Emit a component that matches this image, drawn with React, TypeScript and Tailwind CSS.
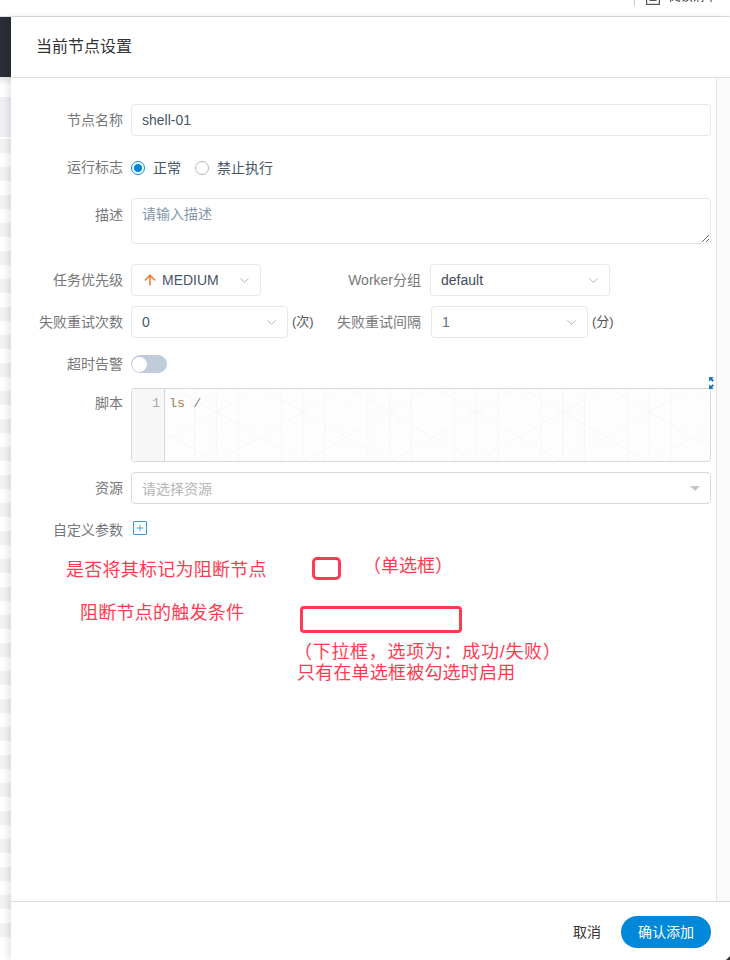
import React from "react";
import { ChevronDown, ArrowUp, Plus } from "lucide-react";

const font = "font-['Liberation_Sans','Noto_Sans_CJK_SC',sans-serif]";

function Label({ children, w = "w-[112px]", cls = "" }: { children: React.ReactNode; w?: string; cls?: string }) {
  return <div className={`${w} ${cls} shrink-0 text-right text-[14px] text-[#777]`}>{children}</div>;
}

function Select({ w, children }: { w: string; children: React.ReactNode }) {
  return (
    <div className={`${w} h-[32px] shrink-0 flex items-center justify-between rounded-[4px] border border-[#e3e9f0] pl-[10px] text-[14px] text-[#475669]`}>
      <div className="flex items-center">{children}</div>
      <ChevronDown size={15} strokeWidth={1.1} className="mr-[8px] text-[#8492a6]" />
    </div>
  );
}

function IsoGrid() {
  return (
    <svg className="absolute inset-0 h-full w-full" aria-hidden="true">
      <defs>
        <pattern id="fine" width="4.33" height="5" patternUnits="userSpaceOnUse" x="0" y="0">
          <path d="M0 0V5M0 0L4.33 2.5M0 5L4.33 2.5" stroke="#f5f5f5" strokeWidth="0.5" fill="none" />
        </pattern>
        <pattern id="major" width="86.6" height="50" patternUnits="userSpaceOnUse" x="8" y="-2">
          <path d="M0 0L86.6 50M0 50L86.6 0M21.65 0V50M43.3 0V50M65 0V50" stroke="#f1f1f1" strokeWidth="0.6" fill="none" />
        </pattern>
      </defs>
      <rect width="100%" height="100%" fill="url(#fine)" />
      <rect width="100%" height="100%" fill="url(#major)" />
    </svg>
  );
}

const stripes = Array.from({ length: 29 }, (_, i) => i);

export default function App() {
  return (
    <div className={`${font} relative flex h-[960px] w-[730px] flex-col overflow-hidden bg-white`}>
      {/* top page bar */}
      <div className="flex h-[17px] shrink-0 justify-end overflow-hidden border-b border-[#dcdfe6] pr-[13px]">
        <div className="flex h-[16px] items-start">
          <div className="h-[6px] w-px bg-[#c8c8c8]" />
          <svg width="14" height="14" viewBox="0 0 14 14" className="ml-[11px] -mt-[9px]" fill="none" stroke="#555" strokeWidth="1.2">
            <rect x="0.6" y="0.6" width="12.8" height="12.8" />
            <path d="M3.5 4.5h7M3.5 7h7M3.5 9.5h7" />
          </svg>
          <span className="ml-[9px] -mt-[12px] text-[12px] leading-[18px] text-[#333]">阅读清单</span>
        </div>
      </div>

      <div className="flex min-h-0 flex-1">
        {/* page behind the drawer */}
        <div className="flex w-[11px] shrink-0 flex-col">
          <div className="h-[60px] shrink-0 bg-[#2a2d37]" />
          <div className="h-[20px] shrink-0 bg-gradient-to-b from-[#e4e4e4] to-white to-40%" />
          <div className="h-[40px] shrink-0 bg-[#eef0f4]" />
          <div className="h-[2px] shrink-0" />
          {stripes.map((i) => (
            <div key={i} className="h-[28px] shrink-0">
              <div className="h-[14px] bg-[#f2f2f2]" />
            </div>
          ))}
        </div>

        {/* drawer */}
        <div className="relative z-10 flex min-w-0 flex-1 flex-col bg-white shadow-[-3px_0_7px_rgba(0,0,0,0.10)]">
          <div className="flex h-[61px] shrink-0 items-center border-b border-[#dcdfe6] pl-[25px] text-[16px] text-[#333]">
            当前节点设置
          </div>

          <div className="flex min-h-0 flex-1">
            <div className="min-w-0 flex-1 pr-[5px] pt-[26px]">
              <div className="flex items-center gap-[8px]">
                <Label>节点名称</Label>
                <input
                  readOnly
                  value="shell-01"
                  className="h-[32px] flex-1 rounded-[4px] border border-[#e3e9f0] px-[10px] text-[14px] text-[#475669] outline-none"
                />
              </div>

              <div className="mt-[16px] flex h-[32px] items-center gap-[8px]">
                <Label cls="-translate-y-[1px]">运行标志</Label>
                <div className="flex items-center text-[14px] text-[#475669]">
                  <span className="flex h-[14px] w-[14px] items-center justify-center rounded-full border border-[#0288d8]">
                    <span className="h-[8px] w-[8px] rounded-full bg-[#0288d8]" />
                  </span>
                  <span className="ml-[8px]">正常</span>
                  <span className="ml-[14px] h-[14px] w-[14px] rounded-full border border-[#b5b8bd]" />
                  <span className="ml-[8px]">禁止执行</span>
                </div>
              </div>

              <div className="mt-[14px] flex items-start gap-[8px]">
                <div className="pt-[7px]">
                  <Label>描述</Label>
                </div>
                <textarea
                  readOnly
                  placeholder="请输入描述"
                  className="h-[46px] flex-1 resize-y rounded-[4px] border border-[#e3e9f0] px-[10px] py-[5px] text-[14px] outline-none placeholder:text-[#8496ab]"
                />
              </div>

              <div className="mt-[20px] flex items-center">
                <Label>任务优先级</Label>
                <div className="ml-[8px]">
                  <Select w="w-[130px]">
                    <ArrowUp size={16} strokeWidth={2.4} className="mr-[4px] text-[#f07b33]" />
                    <span>MEDIUM</span>
                  </Select>
                </div>
                <Label w="w-[160px]">Worker分组</Label>
                <div className="ml-[9px]">
                  <Select w="w-[180px]">
                    <span className="text-[#444c58]">default</span>
                  </Select>
                </div>
              </div>

              <div className="mt-[10px] flex items-center">
                <Label>失败重试次数</Label>
                <div className="ml-[8px]">
                  <Select w="w-[157px]"><span>0</span></Select>
                </div>
                <span className="ml-[4px] w-[25px] text-[13px] text-[#555]">(次)</span>
                <Label w="w-[104px]">失败重试间隔</Label>
                <div className="ml-[10px]">
                  <Select w="w-[157px]"><span className="text-[#5c6b7c]">1</span></Select>
                </div>
                <span className="ml-[4px] text-[13px] text-[#555]">(分)</span>
              </div>

              <div className="mt-[17px] flex h-[18px] items-center gap-[8px]">
                <Label>超时告警</Label>
                <div className="flex h-[18px] w-[36px] items-center rounded-full bg-[#c0ccda] pl-[1px]">
                  <span className="h-[15px] w-[15px] rounded-full bg-white" />
                </div>
              </div>

              <div className="relative mt-[15px] flex items-start gap-[8px]">
                <div className="pt-[5px]">
                  <Label>脚本</Label>
                </div>
                <div className="relative flex h-[74px] flex-1 overflow-hidden rounded-[3px] border border-[#d9d9d9]">
                  <div className="z-10 w-[33px] shrink-0 border-r border-[#d9d9d9] bg-[#f7f7f7] pr-[4px] pt-[6px] text-right font-['Liberation_Mono',monospace] text-[13.5px] leading-[17px] text-[#aaa]">
                    1
                  </div>
                  <div className="relative flex-1">
                    <IsoGrid />
                    <div className="relative pl-[4px] pt-[6px] font-['Liberation_Mono',monospace] text-[13.5px] leading-[17px]">
                      <span className="text-[#a67f59]">ls</span>
                      <span className="text-[#888]"> /</span>
                    </div>
                  </div>
                </div>
                <svg width="5" height="12" viewBox="0 0 5 12" className="absolute -right-[3px] -top-[11px]" fill="#1a76bd" aria-hidden="true">
                  <path d="M0 0H4.5L3.2 1.4L5 3.4L3.6 4.8L1.7 2.9L0 4.5Z" />
                  <path d="M0 12H4.5L3.2 10.6L5 8.6L3.6 7.2L1.7 9.1L0 7.5Z" />
                </svg>
              </div>

              <div className="mt-[10px] flex items-center gap-[8px]">
                <Label>资源</Label>
                <div className="flex h-[32px] flex-1 items-center justify-between rounded-[4px] border border-[#d9d9d9] pl-[10px] pr-[10px] text-[14px] text-[#b5b5b5]">
                  <span className="translate-y-[1px]">请选择资源</span>
                  <span className="h-0 w-0 border-x-[5px] border-t-[5px] border-x-transparent border-t-[#c0c4cc]" />
                </div>
              </div>

              <div className="mt-[16px] flex h-[18px] items-center gap-[8px]">
                <Label cls="translate-y-[1px]">自定义参数</Label>
                <span className="ml-[2px] flex h-[14px] w-[14px] -translate-y-[1px] items-center justify-center rounded-[1px] border-[1.5px] border-[#2d9bdc]">
                  <Plus size={10} strokeWidth={1.6} className="text-[#0288d8]" />
                </span>
              </div>
            </div>
            <div className="w-[14px] shrink-0 border-l border-[#e4e4e4] bg-[#fafafa]" />
          </div>

          <div className="flex h-[59px] shrink-0 items-center justify-end border-t border-[#dcdcdc] pr-[19px] pt-[2px]">
            <span className="mr-[20px] text-[14px] text-[#333]">取消</span>
            <div className="flex h-[32px] w-[90px] items-center justify-center rounded-full bg-[#0288d8] text-[14px] text-white">
              确认添加
            </div>
          </div>
        </div>
      </div>

      {/* red annotations lying over the page */}
      <div className="absolute left-[66px] top-[557px] z-20 text-[18px] leading-[26px] tracking-[0.25px] text-[#ff3b52]">是否将其标记为阻断节点</div>
      <div className="absolute left-[312px] top-[557px] z-20 h-[23px] w-[29px] rounded-[5px] border-[3px] border-[#ff3b52]" />
      <div className="absolute left-[363px] top-[553px] z-20 text-[18px] leading-[26px] text-[#ff3b52]">（单选框）</div>
      <div className="absolute left-[80px] top-[600px] z-20 text-[18px] leading-[26px] tracking-[0.25px] text-[#ff3b52]">阻断节点的触发条件</div>
      <div className="absolute left-[300px] top-[606px] z-20 h-[27px] w-[162px] rounded-[4px] border-[3px] border-[#ff3b52]" />
      <div className="absolute left-[294px] top-[639px] z-20 whitespace-nowrap text-[18px] leading-[26px] tracking-[0.7px] text-[#ff3b52]">（下拉框，选项为：成功/失败）</div>
      <div className="absolute left-[297px] top-[660px] z-20 text-[18px] leading-[26px] tracking-[0.2px] text-[#ff3b52]">只有在单选框被勾选时启用</div>
      <div className="absolute bottom-0 right-0 z-20 h-0 w-0 border-b-[4px] border-l-[4px] border-b-[#333] border-l-transparent" />
    </div>
  );
}
